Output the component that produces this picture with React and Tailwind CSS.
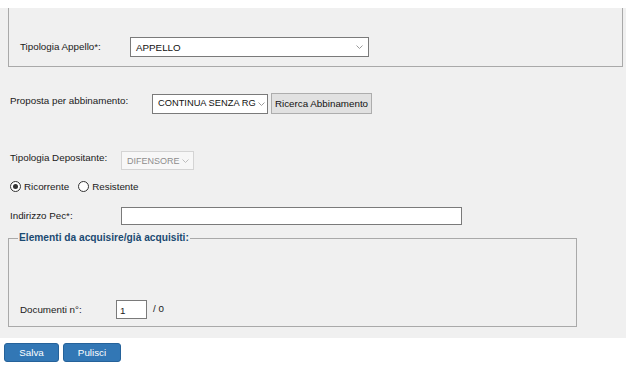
import React from 'react';

const Chevron = ({ color = '#8a8a8a' }) => (
  <svg width="7" height="4" viewBox="0 0 7 4" className="shrink-0">
    <path d="M0.5 0.5 L3.5 3.5 L6.5 0.5" fill="none" stroke={color} strokeWidth="1" />
  </svg>
);

const Select = ({ value, className = '', disabled = false }) => (
  <div
    className={`flex items-center justify-between gap-[2px] border pl-[5px] pr-[5px] whitespace-nowrap overflow-hidden ${
      disabled
        ? 'bg-[#f7f7f7] border-[#d4d4d4] text-[#8d8d8d]'
        : 'bg-white border-[#7a7a7a] text-[#111]'
    } ${className}`}
  >
    <span className="pt-[1px]">{value}</span>
    <Chevron color={disabled ? '#bdbdbd' : '#9a9a9a'} />
  </div>
);

const Radio = ({ checked }) => (
  <span className="w-[11px] h-[11px] rounded-full border border-[#333] bg-white flex items-center justify-center">
    {checked && <span className="w-[5px] h-[5px] rounded-full bg-[#333]" />}
  </span>
);

const App = () => {
  return (
    <div
      className="w-[633px] h-[366px] bg-white pt-[8px] text-[9.8px] text-[#1a1a1a] leading-none"
      style={{ fontFamily: '"Liberation Sans", Arial, sans-serif' }}
    >
      <div className="w-[626px] h-[330px] bg-[#f0f0f0] flex flex-col">
        {/* Tipologia appello */}
        <div className="ml-[8px] w-[615px] h-[59px] border-l border-r border-b border-[#a9a9a9] pt-[29px] pl-[11px] flex items-start">
          <span className="w-[110px] pt-[5px]">Tipologia Appello*:</span>
          <Select value="APPELLO" className="w-[239px] h-[20px]" />
        </div>

        {/* Proposta */}
        <div className="mt-[26px] pl-[10px] flex items-center">
          <span className="w-[142px] -mt-[6px]">Proposta per abbinamento:</span>
          <Select value="CONTINUA SENZA RG" className="w-[116px] h-[20px] text-[9.3px]" />
          <button className="ml-[3px] w-[101px] h-[21px] bg-[#e1e1e1] border border-[#adadad] text-[#111] whitespace-nowrap">
            Ricerca Abbinamento
          </button>
        </div>

        {/* Depositante */}
        <div className="mt-[37px] pl-[10px] flex items-center">
          <span className="w-[111px] -mt-[5px]">Tipologia Depositante:</span>
          <Select value="DIFENSORE" disabled className="w-[73px] h-[19px] text-[9px]" />
        </div>

        <div className="mt-[9px] h-[15px] pl-[10px] flex items-center">
          <Radio checked />
          <span className="ml-[3px]">Ricorrente</span>
          <span className="ml-[9px]"><Radio /></span>
          <span className="ml-[3px]">Resistente</span>
        </div>

        {/* Pec */}
        <div className="mt-[13px] pl-[10px] flex items-center">
          <span className="w-[111px]">Indirizzo Pec*:</span>
          <div className="w-[341px] h-[18px] bg-white border border-[#7a7a7a]" />
        </div>

        {/* Elementi */}
        <div className="relative mt-[13px] ml-[8px] w-[569px] h-[89px] border border-[#a9a9a9] pt-[61px] pl-[11px]">
          <span className="absolute left-[9px] -top-[6px] px-[1px] bg-[#f0f0f0] font-bold text-[10.2px] text-[#1b4a72]">
            Elementi da acquisire/già acquisiti:
          </span>
          <div className="flex items-center">
            <span className="w-[96px]">Documenti n°:</span>
            <div className="w-[31px] h-[19px] bg-white border border-[#7a7a7a] flex items-center pl-[3px] pt-[3px]">
              1
            </div>
            <span className="ml-[6px] -mt-[1px]">/ 0</span>
          </div>
        </div>
      </div>

      <div className="mt-[5px] pl-[4px] flex gap-[4px]">
        <button className="w-[55px] h-[19px] rounded-[3px] bg-[#3277b5] border border-[#25629a] text-white">
          Salva
        </button>
        <button className="w-[58px] h-[19px] rounded-[3px] bg-[#3277b5] border border-[#25629a] text-white">
          Pulisci
        </button>
      </div>
    </div>
  );
};

export default App;
